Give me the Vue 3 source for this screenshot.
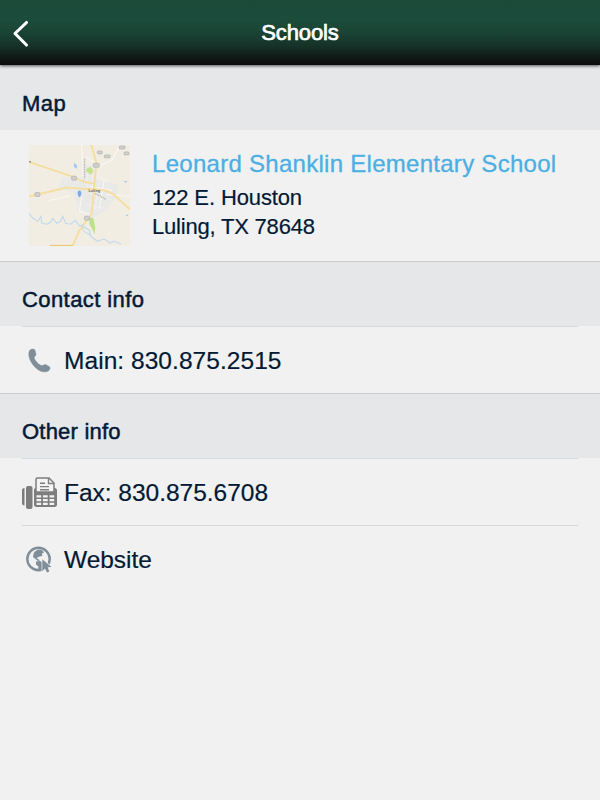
<script setup>
const school = {
  name: 'Leonard Shanklin Elementary School',
  street: '122 E. Houston',
  city: 'Luling, TX 78648'
}
</script>

<template>
  <div class="screen">
    <header class="bar">
      <svg class="back" width="24" height="30" viewBox="0 0 24 30">
        <path d="M17.500 4.500 6 15.500 17.500 27" fill="none" stroke="#fff" stroke-width="3.100" stroke-linecap="round" stroke-linejoin="round" />
      </svg>
      <h1>Schools</h1>
    </header>

    <h2 class="first"><span class="map-title">Map</span></h2>
    <section class="place">
      <svg class="map" width="101" height="101" viewBox="0 0 102 102">
        <rect width="102" height="102" fill="#f1ede3" />
        <path d="M54 22 68 20 69 35 91 40 87 53 78 66 63 74 50 67 45 48 29 43 34 32 55 34Z" fill="#e9e9e8" />
        <path d="M53 0 55 33M70 22 84 15 92 0M66 18 58 12M78 50 102 52M20 56 42 51M53 53 51 67 61 70M62 42 84 46M76 35 71 65" fill="none" stroke="#f9f7f2" stroke-width="1.1" />
        <path d="M59 26v17M64 24v20M71 37 67 65M61 49 83 56M57 60 77 64M68 31 82 38" fill="none" stroke="#f4f3f0" stroke-width=".7" />
        <path d="M0 17 44 32Q57 39 67 39M0 52 38 43 65 45Q81 44 90 54L102 65M63 0 68 18 66 40 65 53 63 70 57 78 51 86 44 102" fill="none" stroke="#f5dea0" stroke-width="2" />
        <path d="M21 101.500h23" stroke="#eac86f" stroke-width="1.200" />
        <path d="m58 24 4-2 3 4-2 4-5-3Z" fill="#c4e08a" />
        <path d="m61 73 4 1 2 10-1 6-2-5-3-5Z" fill="#bce08c" />
        <path d="M0 69 4 74 9 77 12 72 13 79 18 80 22 78 24 74 28 79 32 77 34 72 37 79 42 80 47 76 51 82 55 80M63 91Q53 88 54 82L61 86 62 92 69 97 76 95 82 99 86 97 93 100" fill="none" stroke="#c0d9ec" stroke-width="1.100" />
        <path d="m46 19 2 2v2l-2-1ZM96 37h3M98 71h2" fill="#8bbcef" stroke="#a6ccef" stroke-width="1.200" />
        <path d="M51 53c-3-3-2-7 0-7s3 4 0 7Z" fill="#75aaf0" />
        <g fill="#cfcfcc" stroke="#aaa" stroke-width=".6">
          <rect x="43" y="31.500" width="5" height="4" rx="1" /><rect x="6" y="48" width="5" height="4" rx="1" />
          <rect x="65" y="18.500" width="6" height="4" rx="1" /><rect x="69" y="6" width="5" height="3" rx="1" />
          <rect x="76" y="10" width="6" height="3" rx="1" /><rect x="91" y="1" width="6" height="3" rx="1" />
          <rect x="96" y="7" width="5" height="3" rx="1" /><rect x="56" y="72" width="5" height="4" rx="1" />
        </g>
        <circle cx="1" cy="17" r=".8" fill="#666" />
        <text class="town" x="60" y="47">Luling</text>
        <path d="M56 14v20M67 49l11 6" stroke="#b5b5b5" stroke-width="1.500" stroke-dasharray="1 .7" />
      </svg>
      <div class="address">
        <a class="name">{{ school.name }}</a>
        <span class="street">{{ school.street }}</span>
        <span class="city">{{ school.city }}</span>
      </div>
    </section>

    <h2><span>Contact info</span></h2>
    <div class="row">
      <svg class="icon" width="36" height="36" viewBox="0 0 36 36">
        <path d="M7.400 7.800C8.300 6 11.600 5.500 12.800 6.700L14 11.200C14 12.500 12.500 13.300 12.200 14.500C12.600 17.500 16.500 21.600 19.500 22.600C21 22.700 22 21.300 23.500 21.500L27.200 23.500C28.600 24.500 28 26.500 27 27.500C24.500 29.500 20 29.300 16.500 27C10.500 23.200 4.800 14 7.400 7.800Z" fill="#7f8e98" stroke="#7f8e98" stroke-width=".5" />
      </svg>
      <span class="phone">Main: 830.875.2515</span>
    </div>

    <h2><span class="other-title">Other info</span></h2>
    <div class="row">
      <svg class="icon fax-icon" width="36" height="36" viewBox="0 0 36 36">
        <g fill="#7d7d7d">
          <path d="M2.500 12v17.500C1 29.500 0 28.700 0 27.500V14c0-1.200 1-2 2.500-2Z" />
          <rect x="4" y="10" width="6.500" height="23" rx="2" />
          <path d="M12 14c0-1.200.8-2 2-2h18.500c1.500 0 2.500 1 2.500 2.200V28.500c0 1.500-1 2.500-2.500 2.500H14.500c-1.500 0-2.500-1-2.500-2.500Z" />
        </g>
        <path d="M14 16V3.500C14 2.500 14.500 2 15.500 2H27l5 5v9Z" fill="#f4f4f4" stroke="#7d7d7d" stroke-width="1.500" />
        <path d="M26.500 2v5.500H32M18 7.300h5M18 10.600h9M18 13.700h9" fill="none" stroke="#7d7d7d" stroke-width="1.400" />
        <path d="M14.500 19.200h4.700v2.200h-4.700ZM21 19.200h4.700v2.200H21ZM27.500 19.200h4.700v2.200h-4.700ZM14.500 23h4.700v2.200h-4.700ZM21 23h4.700v2.200H21ZM27.500 23h4.700v2.200h-4.700ZM14.500 26.800h4.700V29h-4.700ZM21 26.800h4.700V29H21ZM27.500 26.800h4.700V29h-4.700Z" fill="#f2f2f2" />
      </svg>
      <span class="fax">Fax: 830.875.6708</span>
    </div>
    <div class="row">
      <svg class="icon web-icon" width="36" height="36" viewBox="0 0 36 36">
        <circle cx="16.500" cy="16" r="11.200" fill="none" stroke="#7f8e98" stroke-width="2.400" />
        <path d="M13 8.500 16 6.500 20 7 22 9.500 20 10.500 20.300 13 17.500 13.500 14.500 15 18 17.500 16 18 11 14 11.800 10ZM14 18.500 18 18 20.500 19.500 20 28 16 27.500 16.500 23.500 14 21.500Z" fill="#7f8e98" />
        <path d="M20.300 16.200V28.300L23 25.500 25 29.500 27.300 28.500 25.700 24.300 29.500 24Z" fill="#7f8e98" stroke="#f2f2f2" stroke-width="1.400" paint-order="stroke" />
      </svg>
      <span class="web">Website</span>
    </div>
  </div>
</template>

<style>
body { background: #f1f1f1; }
</style>

<style scoped>
.screen {
  box-sizing: border-box;
  min-height: 800px;
  background: #f1f1f1;
  color: #031a35;
  font-family: "Liberation Sans", Arial, sans-serif;
}
.bar {
  position: relative;
  height: 65px;
  display: grid;
  grid-template-columns: 60px 1fr 60px;
  align-items: center;
  background: linear-gradient(#1b4a39 0%, #1c4c3b 30%, #1a4435 50%, #163127 72%, #101a16 88%, #0d0d0d 98%);
  box-shadow: 0 1px 3px rgba(0, 0, 0, .65);
}
.back { margin: 0 0 0 9px; }
h1 {
  margin: 0;
  text-align: center;
  color: #fff;
  font-size: 22px;
  line-height: 26px;
  font-weight: 400;
  letter-spacing: -.1px;
  -webkit-text-stroke: .7px #fff;
}
h2 {
  box-sizing: border-box;
  height: 65px;
  margin: 0;
  padding: 25px 22px 0;
  border-top: 1px solid #cbcdce;
  background: #e6e7e9;
  font-size: 22px;
  line-height: 26px;
  font-weight: 400;
  letter-spacing: .42px;
  -webkit-text-stroke: .5px #031a35;
}
.first { border-top: 0; padding-top: 26px; }
.map-title { letter-spacing: .5px; }
.other-title { letter-spacing: .22px; }
.place {
  box-sizing: border-box;
  height: 131px;
  padding: 15px 29px;
  display: flex;
  gap: 22px;
}
.town { font: bold 4px "Liberation Sans", sans-serif; fill: #666; }
.address {
  display: flex;
  flex-direction: column;
  padding-top: 4px;
  font-size: 22px;
  line-height: 29px;
  white-space: nowrap;
  -webkit-text-stroke: .2px #031a35;
}
.name {
  color: #4bafe3;
  font-size: 24px;
  line-height: 30px;
  margin-bottom: 4px;
  letter-spacing: .28px;
  -webkit-text-stroke: .3px #4bafe3;
}
.street { letter-spacing: -.12px; }
.city { letter-spacing: -.2px; }
.row {
  box-sizing: border-box;
  height: 67px;
  margin: 0 22px;
  border-top: 1px solid #d5d8dc;
  display: flex;
  align-items: center;
  gap: 6px;
  font-size: 24.5px;
  line-height: 30px;
  -webkit-text-stroke: .2px #031a35;
}
.row span { padding-top: 2px; }
.icon { margin-top: 2px; }
.fax-icon { margin-top: 3px; }
.web-icon { margin-top: 4px; }
.phone { letter-spacing: .05px; }
.fax { letter-spacing: -.02px; }
.web { letter-spacing: -.02px; }
</style>
